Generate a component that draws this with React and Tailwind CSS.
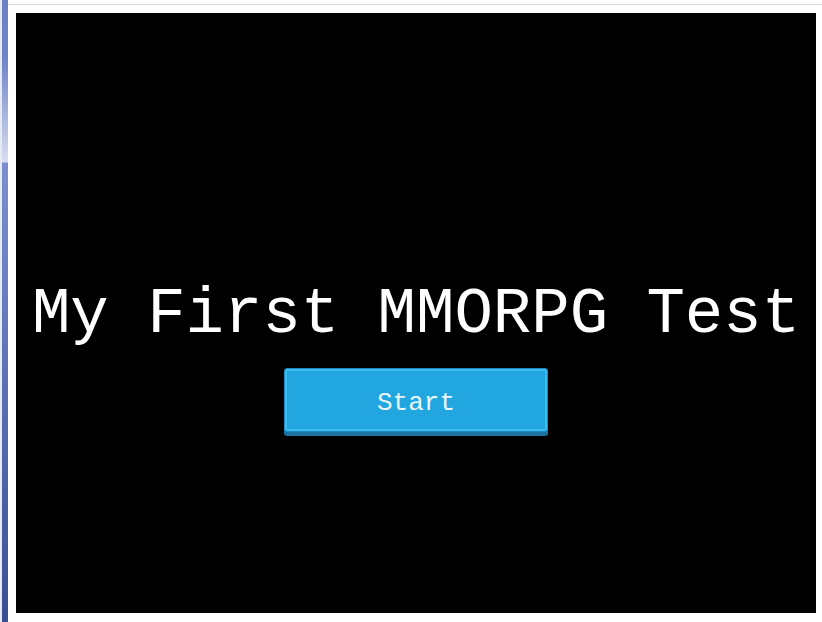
export default function App() {
  return (
    <div className="w-[822px] h-[622px] bg-white flex overflow-hidden">
      <div className="w-2 h-full border-l-2 border-[#e6eaf4] bg-[linear-gradient(to_bottom,#6b81c5_0px,#6f85c7_60px,#d8def0_162px,#7c90d0_163px,#3a4f92_622px)]" />
      <div className="flex-1 flex flex-col">
        <div className="pt-1">
          <div className="h-px bg-[#d6d6d6]" />
        </div>
        <div className="ml-2 mt-2 w-[800px] h-[600px] bg-black flex flex-col items-center pt-[270px]">
          <h1 className="text-white text-[64px] leading-[64px] font-['Liberation_Mono','Courier_New',monospace] whitespace-nowrap">
            My First MMORPG Test
          </h1>
          <button className="mt-[21px] w-[264px] h-[64px] pt-[6px] rounded-[3px] bg-[#21a6e0] border border-[#1b8cc2] shadow-[inset_0_0_0_2px_#3dbbef,0_4px_0_#19729f] text-[#eaf6fc] text-[26px] font-['Liberation_Mono','Courier_New',monospace]">
            Start
          </button>
        </div>
      </div>
    </div>
  );
}
